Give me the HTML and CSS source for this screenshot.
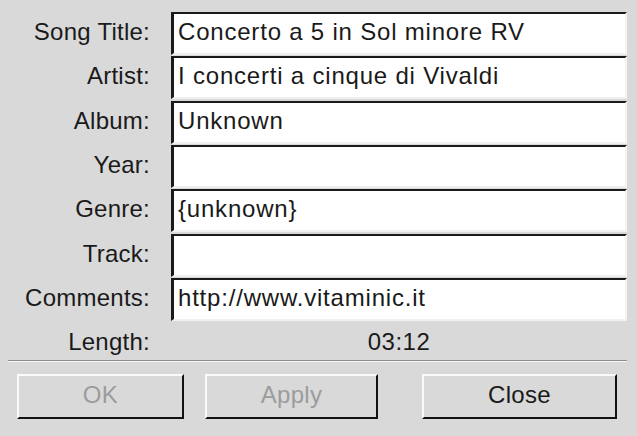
FILE: index.html
```html
<!DOCTYPE html>
<html>
<head>
<meta charset="utf-8">
<link rel="stylesheet" href="styles.css">
</head>
<body>
<div class="dialog">
  <div class="form">
    <label class="lbl">Song Title:</label><div class="field">Concerto a 5 in Sol minore RV</div>
    <label class="lbl">Artist:</label><div class="field">I concerti a cinque di Vivaldi</div>
    <label class="lbl">Album:</label><div class="field">Unknown</div>
    <label class="lbl">Year:</label><div class="field"></div>
    <label class="lbl">Genre:</label><div class="field">{unknown}</div>
    <label class="lbl">Track:</label><div class="field"></div>
    <label class="lbl">Comments:</label><div class="field">http://www.vitaminic.it</div>
    <label class="lbl">Length:</label><div class="value">03:12</div>
  </div>
  <div class="sep"></div>
  <div class="buttons">
    <button class="btn ok" disabled>OK</button>
    <button class="btn apply" disabled>Apply</button>
    <button class="btn close">Close</button>
  </div>
</div>
</body>
</html>
```
FILE: styles.css
```css
html, body {
  margin: 0;
  padding: 0;
  background: #d9d9d9;
}
body {
  width: 637px;
  height: 436px;
  overflow: hidden;
  font-family: "Liberation Sans", Arial, sans-serif;
  font-size: 24px;
  color: #1a1a1a;
}
.dialog {
  padding-top: 12px;
}
.form {
  display: grid;
  grid-template-columns: 150px 456px;
  grid-template-rows: repeat(7, 43px) 38px;
  column-gap: 21px;
  row-gap: 1.33px;
}
.lbl {
  text-align: right;
  line-height: 40px;
  white-space: nowrap;
  letter-spacing: 0.25px;
}
.field {
  background: #ffffff;
  border-style: solid;
  border-width: 2px 2px 2px 3px;
  border-color: #1a1a1a #f4f4f4 #f0f0f0 #1a1a1a;
  box-sizing: border-box;
  padding-left: 4px;
  line-height: 35px;
  white-space: nowrap;
  overflow: hidden;
  letter-spacing: 0.8px;
}
.value {
  text-align: center;
  line-height: 40px;
  letter-spacing: 0.5px;
}
.sep {
  margin: 0 10px 0 8px;
  height: 0;
  border-top: 1px solid #8c8c8c;
  border-bottom: 1px solid #f6f6f6;
}
.buttons {
  display: flex;
  padding: 12px 0 0 17px;
  gap: 21px;
}
.btn {
  height: 45px;
  background: #d9d9d9;
  font-family: "Liberation Sans", Arial, sans-serif;
  font-size: 24px;
  color: #1a1a1a;
  border-style: solid;
  border-width: 2px;
  border-color: #fafafa #111111 #111111 #fafafa;
  padding: 0 0 4px 0;
  letter-spacing: 0.3px;
}
.btn:disabled {
  color: #9c9c9c;
}
.ok { width: 167px; }
.apply { width: 173px; }
.close { width: 195px; margin-left: 23px; }
```
